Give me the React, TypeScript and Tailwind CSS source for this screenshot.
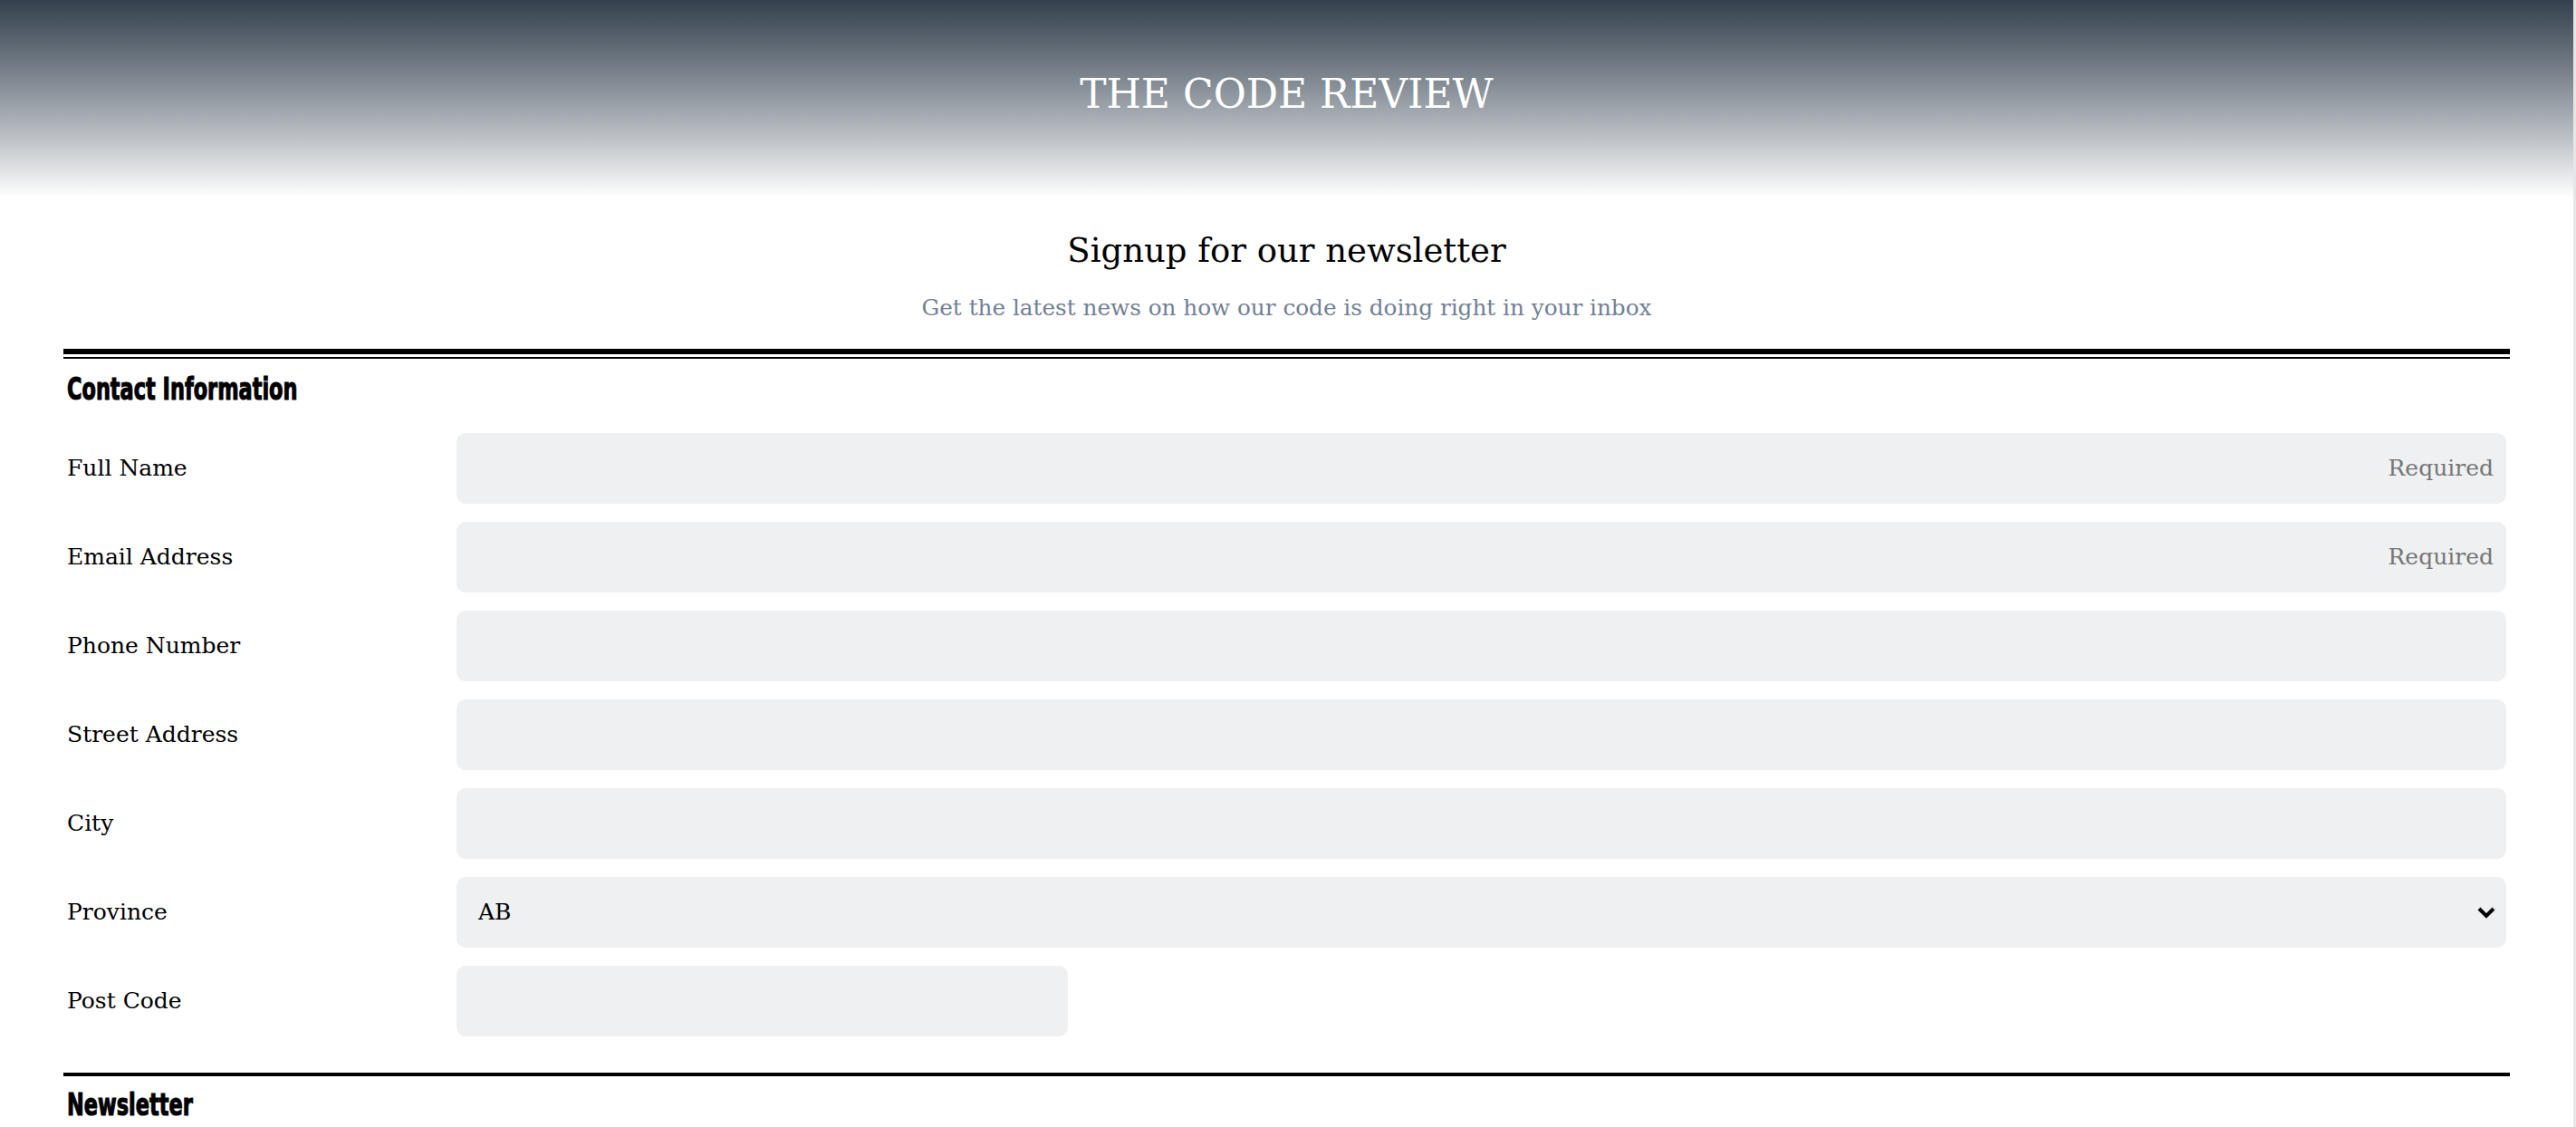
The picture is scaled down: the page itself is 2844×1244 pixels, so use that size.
import React from "react";

const serif = { fontFamily: '"DejaVu Serif", "Liberation Serif", serif' };
const impact = {
  fontFamily: 'Impact, "DejaVu Sans", "Liberation Sans", sans-serif',
};

const provinces = ["AB", "BC", "MB", "NB", "NL", "NS", "NT", "NU", "ON", "PE", "QC", "SK", "YT"];

function SectionTitle({ children }: { children: React.ReactNode }) {
  // squeezed + stroked bold sans stands in for Impact
  return (
    <h3
      className="inline-block origin-left scale-x-[0.68] text-[33px] leading-[44px] font-bold whitespace-nowrap text-black [-webkit-text-stroke:1.2px_black]"
      style={impact}
    >
      {children}
    </h3>
  );
}

function Row({ label, children }: { label: string; children: React.ReactNode }) {
  return (
    <div className="grid grid-cols-[430px_1fr] items-center">
      <label className="text-[25px] text-black">{label}</label>
      {children}
    </div>
  );
}

function TextInput({ required = false, short = false }: { required?: boolean; short?: boolean }) {
  return (
    <input
      type="text"
      placeholder={required ? "Required" : ""}
      className={`h-[78px] rounded-[10px] bg-[#eff0f2] px-[14px] text-right text-[25px] text-black outline-none placeholder:text-[#767676] ${
        short ? "w-[675px]" : "w-full"
      }`}
      style={serif}
    />
  );
}

export default function App() {
  return (
    <div className="flex h-[1244px] overflow-hidden bg-white" style={serif}>
      <div className="flex-1">
        <header className="flex h-[218px] items-center justify-center bg-gradient-to-b from-[#35414e] to-white pb-[10px]">
          <h1 className="text-[44px] text-white">THE CODE REVIEW</h1>
        </header>

        <div className="flex flex-col items-center pt-[31px]">
          <h2 className="text-[37px] text-black">Signup for our newsletter</h2>
          <p className="mt-[16px] text-[24.7px] text-[#718096]">
            Get the latest news on how our code is doing right in your inbox
          </p>
        </div>

        <form className="px-[70px] pt-[27px]">
          <div className="h-[6px] bg-black" />
          <div className="mt-[3px] h-[2px] bg-black" />

          <section className="px-[4px]">
            <div className="mt-[12px]">
              <SectionTitle>Contact Information</SectionTitle>
            </div>
            <div className="mt-[26px] flex flex-col gap-[20px]">
              <Row label="Full Name">
                <TextInput required />
              </Row>
              <Row label="Email Address">
                <TextInput required />
              </Row>
              <Row label="Phone Number">
                <TextInput />
              </Row>
              <Row label="Street Address">
                <TextInput />
              </Row>
              <Row label="City">
                <TextInput />
              </Row>
              <Row label="Province">
                <div className="relative">
                  <select
                    className="h-[78px] w-full appearance-none rounded-[10px] bg-[#eff0f2] pl-[24px] text-[25px] text-black outline-none"
                    style={serif}
                    defaultValue="AB"
                  >
                    {provinces.map((p) => (
                      <option key={p}>{p}</option>
                    ))}
                  </select>
                  <svg
                    className="pointer-events-none absolute right-[11px] top-1/2 -translate-y-1/2"
                    width="22"
                    height="14"
                    viewBox="0 0 22 14"
                  >
                    <path d="M3 3l8 8 8-8" fill="none" stroke="black" strokeWidth="4" />
                  </svg>
                </div>
              </Row>
              <Row label="Post Code">
                <TextInput short />
              </Row>
            </div>
          </section>

          <div className="mt-[40px] h-[4px] bg-black" />
          <section className="px-[4px]">
            <div className="mt-[10px]">
              <SectionTitle>Newsletter</SectionTitle>
            </div>
          </section>
        </form>
      </div>
      <div className="w-[3px] bg-[#e6e6e6]" />
    </div>
  );
}
